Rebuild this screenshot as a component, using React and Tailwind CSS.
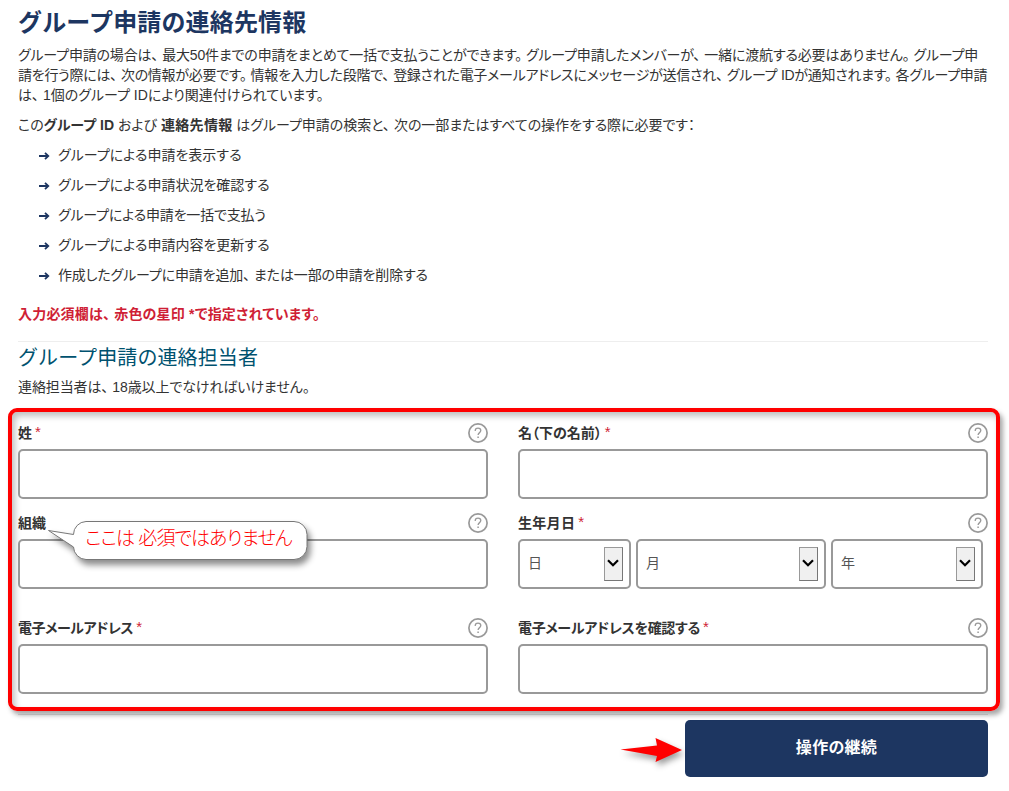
import React from "react";

const actions = [
  { text: "グループによる申請を表示する", spacing: "tracking-[0px]" },
  { text: "グループによる申請状況を確認する", spacing: "tracking-[0px]" },
  { text: "グループによる申請を一括で支払う", spacing: "tracking-[-0.2px]" },
  { text: "グループによる申請内容を更新する", spacing: "tracking-[0px]" },
  { text: "作成したグループに申請を追加、または一部の申請を削除する", spacing: "tracking-[-0.15px]" },
];

// Proportional kana sets commas and full stops too tight, so open them up a little
const Sentence = ({ text }) =>
  text.split(/([、。])/).map((part, index) =>
    part === "、" || part === "。" ? (
      <span key={index} className="mr-1">{part}</span>
    ) : (
      part
    )
  );

const ListArrow = () => (
  <svg width="11" height="8" viewBox="0 0 11 8" fill="none" stroke="#1d3661" strokeWidth="1.8">
    <path d="M0 4H9.5M6 0.8L9.3 4L6 7.2" />
  </svg>
);

const HelpIcon = () => (
  <svg width="20" height="20" viewBox="0 0 20 20" fill="none" stroke="#999999">
    <circle cx="10" cy="10" r="9.1" strokeWidth="1.7" />
    <path d="M7.2 8C7.2 6.1 8.4 5.2 10 5.2C11.7 5.2 12.8 6.2 12.8 7.6C12.8 9.7 10.1 9.6 10.1 12.1" strokeWidth="1.3" />
    <path d="M10.1 13.4V15" strokeWidth="1.5" />
  </svg>
);

const Field = ({ label, spacing = "", required = true, children }) => (
  <div>
    <div className="flex h-[26px] items-start justify-between">
      <label className={`flex h-5 whitespace-nowrap font-bold ${spacing}`}>
        {label}
        {required && <span className="-mt-px ml-[3px] text-[15px] font-normal text-[#cf1f36]">*</span>}
      </label>
      <HelpIcon />
    </div>
    {children || (
      <input type="text" className="block h-[50px] w-full rounded-[5px] border-2 border-[#999999] bg-white px-2" />
    )}
  </div>
);

const DateSelect = ({ label, width }) => (
  <div className={`flex h-[50px] items-center justify-between rounded-[5px] border-2 border-[#999999] bg-white pl-2 pr-1.5 text-[#555555] ${width}`}>
    <span className="-mt-0.5">{label}</span>
    <span className="flex h-[34px] w-[19px] items-center justify-center border border-[#777777] border-l-[#999999] border-t-[#999999] bg-[#f0f0f0]">
      <svg width="12" height="8" viewBox="0 0 12 8" fill="none" stroke="#000" strokeWidth="2.2" className="-ml-px -mt-0.5">
        <path d="M1 1.2L6 6.2L11 1.2" />
      </svg>
    </span>
  </div>
);

const Callout = () => (
  <div className="absolute left-[36px] top-[108px] h-[52px] w-[270px]">
    <svg width="280" height="60" viewBox="0 0 280 60" className="absolute -left-1 top-0 overflow-visible drop-shadow-[3px_5px_3px_rgba(0,0,0,0.45)]">
      <path
        d="M42 1.5H250A13 13 0 0 1 263 14.5V26.5A13 13 0 0 1 250 39.5H42A13 13 0 0 1 29.5 27L4.5 10.5L29.5 14.5A13 13 0 0 1 42 1.5Z"
        fill="#fff"
        stroke="#777"
      />
    </svg>
    <p className="absolute left-[37px] top-[5px] whitespace-nowrap text-[19px] font-light leading-[28px] tracking-[-0.95px] text-[#ff0000]">
      ここは 必須ではありません
    </p>
  </div>
);

const App = () => {
  return (
    <div className="h-[791px] w-[1009px] overflow-hidden bg-white pl-[18px] pr-[21px] pt-[7px] font-['Liberation_Sans','Noto_Sans_CJK_JP',sans-serif] text-[14px] leading-5 text-[#333333] [font-feature-settings:'palt']">
      <h1 className="h-[38px] whitespace-nowrap text-[24px] font-bold leading-8 tracking-[0.15px] text-[#1d3661] [font-feature-settings:normal]">
        グループ申請の連絡先情報
      </h1>
      <p className="mb-2.5 whitespace-nowrap">
        <span className="block tracking-[-0.18px]">
          <Sentence text="グループ申請の場合は、最大50件までの申請をまとめて一括で支払うことができます。グループ申請したメンバーが、一緒に渡航する必要はありません。グループ申" />
        </span>
        <span className="block tracking-[-0.27px]">
          <Sentence text="請を行う際には、次の情報が必要です。情報を入力した段階で、登録された電子メールアドレスにメッセージが送信され、グループ IDが通知されます。各グループ申請" />
        </span>
        <span className="block">
          <Sentence text="は、1個のグループ IDにより関連付けられています。" />
        </span>
      </p>
      <p className="mb-2.5 whitespace-nowrap">
        この<strong>グループ ID</strong> および <strong className="tracking-[0.3px]">連絡先情報</strong>
        <span className="tracking-[-0.03px]">
          {" "}
          <Sentence text="はグループ申請の検索と、次の一部またはすべての操作をする際に必要です：" />
        </span>
      </p>
      <ul className="ml-[21px] flex flex-col gap-2.5">
        {actions.map((action) => (
          <li key={action.text} className="flex h-5 items-center gap-2">
            <span className="mt-0.5">
              <ListArrow />
            </span>
            <span className={`whitespace-nowrap ${action.spacing}`}>
              <Sentence text={action.text} />
            </span>
          </li>
        ))}
      </ul>
      <p className="mt-[19px] whitespace-nowrap font-bold tracking-[0.2px] text-[#cf1f36]">
        <Sentence text="入力必須欄は、赤色の星印 *で指定されています。" />
      </p>
      <hr className="mt-[17px] border-[#eeeeee]" />
      <h2 className="h-[35px] whitespace-nowrap pt-px text-[20px] leading-[30px] tracking-[0.1px] text-[#00526f] [font-feature-settings:normal]">
        グループ申請の連絡担当者
      </h2>
      <p className="whitespace-nowrap tracking-[-0.1px]">
        <Sentence text="連絡担当者は、18歳以上でなければいけません。" />
      </p>

      <div className="relative -ml-2.5 -mr-3 mt-[11px] h-[303px] rounded-[9px] border-4 border-[#ff0000] px-1.5 pt-[11px] shadow-[3px_4px_5px_rgba(0,0,0,0.35),inset_3px_4px_6px_rgba(0,0,0,0.25)]">
        <div className="grid w-[970px] grid-cols-2 gap-x-[30px]">
          <Field label="姓" />
          <Field label="名（下の名前）" />
          <div className="mt-[14px]">
            <Field label="組織" required={false} />
          </div>
          <div className="mt-[14px]">
            <Field label="生年月日" spacing="tracking-[0.3px]">
              <div className="flex gap-[5px]">
                <DateSelect label="日" width="w-[113px]" />
                <DateSelect label="月" width="w-[190px]" />
                <DateSelect label="年" width="w-[152px]" />
              </div>
            </Field>
          </div>
          <div className="mt-[29px]">
            <Field label="電子メールアドレス" spacing="tracking-[-0.45px]" />
          </div>
          <div className="mt-[29px]">
            <Field label="電子メールアドレスを確認する" spacing="tracking-[-0.3px]" />
          </div>
        </div>
        <Callout />
      </div>

      <hr className="mt-[3px] border-[#000000]/10" />
      <div className="mt-[5px] flex items-center justify-end">
        <svg width="65" height="36" viewBox="0 0 65 36" className="overflow-visible drop-shadow-[2px_4px_3px_rgba(0,0,0,0.4)]">
          <path d="M0.5 18.5L37 14.5L35.5 7L62 19L35.5 31L37 25Z" fill="#ff0000" />
        </svg>
        <button className="h-[57px] w-[303px] rounded-[5px] bg-[#1d3661] pb-0.5 text-[16px] font-bold tracking-[0.3px] text-white">
          操作の継続
        </button>
      </div>
    </div>
  );
};

export default App;
